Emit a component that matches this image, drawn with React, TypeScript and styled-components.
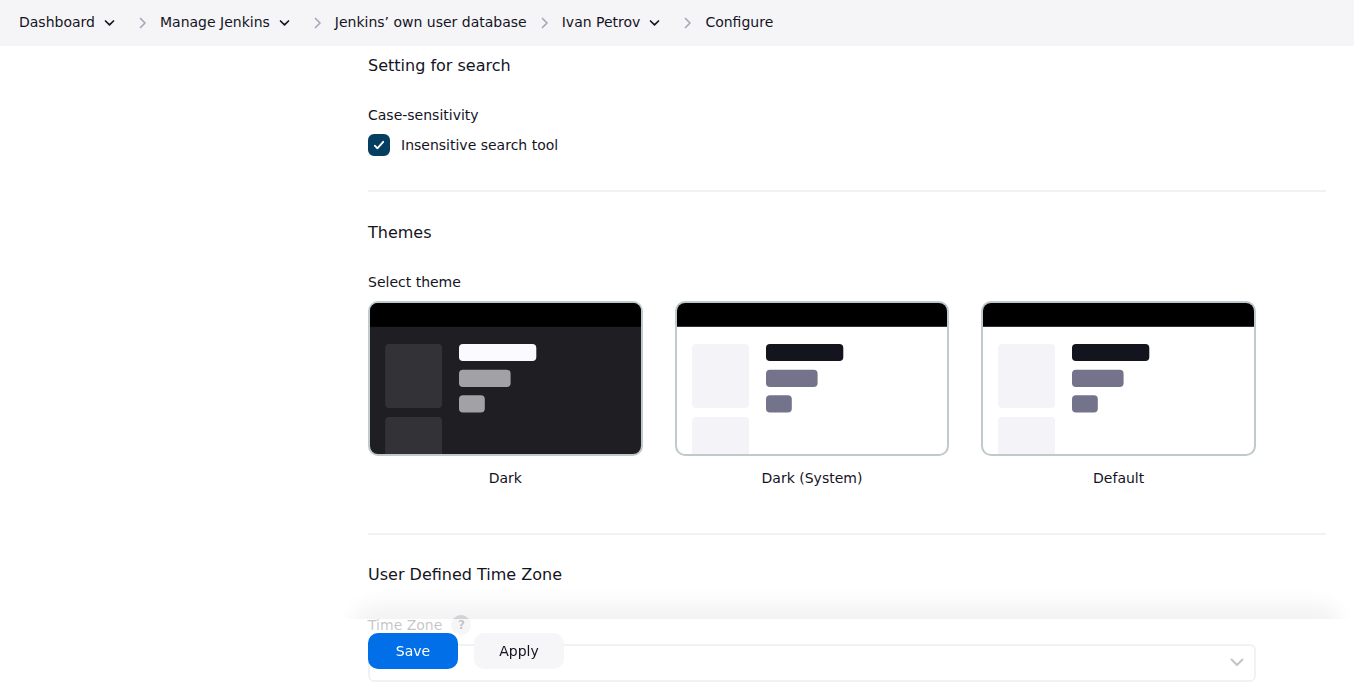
import React from 'react';
import styled, { createGlobalStyle } from 'styled-components';

const GlobalStyle = createGlobalStyle`
  *, *::before, *::after { box-sizing: border-box; }
  body {
    margin: 0;
    padding-right: 12px;
    background: #fff;
    color: #14141f;
    font-family: "DejaVu Sans", "Liberation Sans", sans-serif;
    font-size: 14px;
    line-height: 20px;
  }
`;

const BreadcrumbBar = styled.nav`
  background: #f5f5f8;
  padding: 0 19px;
`;

const Crumbs = styled.ol`
  display: flex;
  align-items: center;
  height: 46px;
  margin: 0;
  padding: 0 0 2px;
  list-style: none;
`;

const Crumb = styled.li`
  display: flex;
  align-items: center;
`;

const CrumbLink = styled.a`
  color: inherit;
  text-decoration: none;
  white-space: nowrap;
`;

const MenuButton = styled.button`
  display: flex;
  align-items: center;
  justify-content: center;
  width: 30px;
  height: 20px;
  padding: 0;
  border: 0;
  background: transparent;
  color: inherit;
`;

const Separator = styled.svg`
  width: 8px;
  height: 12px;
  margin: 1px 13px 0 14px;
  fill: none;
  stroke: #a9a9b8;
  stroke-width: 1.7;
  stroke-linecap: round;
  stroke-linejoin: round;
`;

const Main = styled.main`
  padding: 0 28px 0 368px;
`;

const Section = styled.section<{ $top: number }>`
  padding-top: ${(p) => p.$top}px;
`;

const Heading = styled.h2`
  margin: 0;
  font-size: 16px;
  line-height: 24px;
  font-weight: 400;
`;

const Rule = styled.hr`
  height: 2px;
  margin: 0;
  border: 0;
  background: #f2f2f6;
`;

const Field = styled.div<{ $top?: number; $after?: number }>`
  max-width: 888px;
  margin-top: ${(p) => p.$top ?? 27}px;
  padding-bottom: ${(p) => p.$after ?? 0}px;
`;

const Legend = styled.div`
  margin-bottom: 9px;
`;

const CheckLabel = styled.label`
  display: inline-grid;
  grid-template-columns: 22px auto;
  align-items: center;
  column-gap: 11px;
  height: 22px;
  vertical-align: top;
`;

const Checkbox = styled.input`
  grid-area: 1 / 1;
  appearance: none;
  width: 22px;
  height: 22px;
  margin: 0;
  border: 2px solid #c3ccd1;
  border-radius: 6px;

  &:checked { background: #063e61; border-color: #063e61; }
  &:not(:checked) + svg { visibility: hidden; }
`;

const CheckMark = styled.svg`
  grid-area: 1 / 1;
  width: 22px;
  height: 22px;
  pointer-events: none;
`;

const ThemeGrid = styled.div`
  display: grid;
  grid-template-columns: repeat(3, 1fr);
  gap: 32px;
`;

const ThemeOption = styled.label`
  display: flex;
  flex-direction: column;
  gap: 12px;
  text-align: center;
`;

const ThemeRadio = styled.input`
  position: absolute;
  opacity: 0;
  pointer-events: none;
`;

const Preview = styled.span<{ $bg: string }>`
  display: block;
  height: 155px;
  overflow: hidden;
  border: 2px solid #bfcacd;
  border-radius: 10px;
  background: ${(p) => p.$bg};

  svg { display: block; width: 100%; height: 100%; }
`;

const TimeZoneLabel = styled.div`
  display: flex;
  align-items: center;
  gap: 9px;
  height: 20px;
  margin-bottom: 9px;
`;

const HelpButton = styled.button`
  display: flex;
  align-items: center;
  justify-content: center;
  width: 20px;
  height: 20px;
  padding: 0;
  border: 0;
  border-radius: 50%;
  background: #dcdce2;
  color: #14141f;
  font: 700 12px/20px "DejaVu Sans", sans-serif;
`;

const SelectWrap = styled.div`
  position: relative;
`;

const Select = styled.select`
  display: block;
  appearance: none;
  width: 100%;
  height: 38px;
  padding: 0 36px 0 12px;
  border: 2px solid #c8c8cc;
  border-radius: 6px;
  background: #fff;
  color: inherit;
  font: inherit;
`;

const SelectArrow = styled.svg`
  position: absolute;
  top: 11px;
  right: 12px;
  width: 14px;
  height: 14px;
  pointer-events: none;
`;

const BottomBar = styled.div`
  position: fixed;
  right: 40px;
  bottom: 0;
  left: 368px;
  display: flex;
  gap: 16px;
  padding: 14px 0 13px;
  background: rgba(255, 255, 255, 0.75);
`;

const BarShadow = styled.div`
  position: absolute;
  right: -30px;
  bottom: 100%;
  left: -30px;
  height: 40px;
  overflow: hidden;
  pointer-events: none;

  &::after {
    content: "";
    position: absolute;
    top: 40px;
    right: 30px;
    left: 30px;
    height: 60px;
    border-radius: 8px;
    box-shadow: 0 0 20px 15px rgba(0, 0, 0, 0.05);
  }
`;

const Button = styled.button<{ $primary?: boolean }>`
  width: 90px;
  height: 36px;
  padding: 0;
  border: 0;
  border-radius: 10px;
  background: ${(p) => (p.$primary ? '#006fe8' : '#f6f6f9')};
  color: ${(p) => (p.$primary ? '#fff' : '#14141f')};
  font: inherit;
`;

const crumbs = [
  { text: 'Dashboard', menu: true },
  { text: 'Manage Jenkins', menu: true },
  { text: 'Jenkins’ own user database', menu: false },
  { text: 'Ivan Petrov', menu: true },
  { text: 'Configure', menu: false },
];

const light = { bg: '#ffffff', block: '#f3f3f8', title: '#14141f', line: '#74738c' };
const dark = { bg: '#1f1e23', block: '#333237', title: '#fafaff', line: '#a2a1a6' };

const themes = [
  { name: 'Dark', colors: dark },
  { name: 'Dark (System)', colors: light },
  { name: 'Default', colors: light },
];

function ThemePreview({ colors }: { colors: typeof light }) {
  return (
    <Preview $bg={colors.bg}>
      <svg viewBox="0 0 271 151" preserveAspectRatio="xMinYMin slice" aria-hidden="true">
        <rect width="272" height="23.8" fill="#000" />
        <rect x="15.2" y="41" width="56.8" height="64" rx="4" fill={colors.block} />
        <rect x="15.2" y="114" width="56.8" height="64" rx="4" fill={colors.block} />
        <rect x="89" y="41" width="77.3" height="17" rx="4" fill={colors.title} />
        <rect x="89" y="66.7" width="51.6" height="17.2" rx="4" fill={colors.line} />
        <rect x="89" y="92.3" width="25.8" height="17.2" rx="4" fill={colors.line} />
      </svg>
    </Preview>
  );
}

export default function App() {
  return (
    <>
      <GlobalStyle />
      <BreadcrumbBar aria-label="Breadcrumbs">
        <Crumbs>
          {crumbs.map((c, i) => (
            <Crumb key={c.text}>
              {i > 0 && (
                <Separator viewBox="0 0 8 12" aria-hidden="true">
                  <path d="M1.5 1.5 6 6 1.5 10.5" />
                </Separator>
              )}
              <CrumbLink href="#">{c.text}</CrumbLink>
              {c.menu && (
                <MenuButton type="button" aria-label={`Menu for ${c.text}`}>
                  <svg width="12" height="12" viewBox="0 0 12 12" fill="none" stroke="currentColor" strokeWidth="1.7" strokeLinecap="round" strokeLinejoin="round">
                    <path d="M1.5 5 5.5 8.8 9.5 5" />
                  </svg>
                </MenuButton>
              )}
            </Crumb>
          ))}
        </Crumbs>
      </BreadcrumbBar>
      <Main>
        <Section $top={8}>
          <Heading>Setting for search</Heading>
          <Field $after={34}>
            <Legend>Case-sensitivity</Legend>
            <CheckLabel>
              <Checkbox type="checkbox" defaultChecked />
              <CheckMark viewBox="0 0 22 22" fill="none" stroke="#fff" strokeWidth="1.8" strokeLinecap="round" strokeLinejoin="round" aria-hidden="true">
                <path d="M6.8 11.6 9.4 14.4 15.2 7.8" />
              </CheckMark>
              Insensitive search tool
            </CheckLabel>
          </Field>
          <Rule />
        </Section>
        <Section $top={29}>
          <Heading>Themes</Heading>
          <Field $after={45}>
            <Legend id="theme-legend">Select theme</Legend>
            <ThemeGrid role="radiogroup" aria-labelledby="theme-legend">
              {themes.map((t) => (
                <ThemeOption key={t.name}>
                  <ThemeRadio type="radio" name="theme" value={t.name} />
                  <ThemePreview colors={t.colors} />
                  {t.name}
                </ThemeOption>
              ))}
            </ThemeGrid>
          </Field>
          <Rule />
        </Section>
        <Section $top={28}>
          <Heading>User Defined Time Zone</Heading>
          <Field $top={28}>
            <TimeZoneLabel>
              <label htmlFor="time-zone">Time Zone</label>
              <HelpButton type="button" aria-label="Help for Time Zone">?</HelpButton>
            </TimeZoneLabel>
            <SelectWrap>
              <Select id="time-zone" defaultValue="">
                <option value="" />
              </Select>
              <SelectArrow viewBox="0 0 14 14" fill="none" stroke="#14141f" strokeWidth="2" strokeLinecap="round" strokeLinejoin="round" aria-hidden="true">
                <path d="M1.5 4.5 7 10 12.5 4.5" />
              </SelectArrow>
            </SelectWrap>
          </Field>
        </Section>
      </Main>
      <BottomBar>
        <BarShadow />
        <Button type="button" $primary>Save</Button>
        <Button type="button">Apply</Button>
      </BottomBar>
    </>
  );
}
